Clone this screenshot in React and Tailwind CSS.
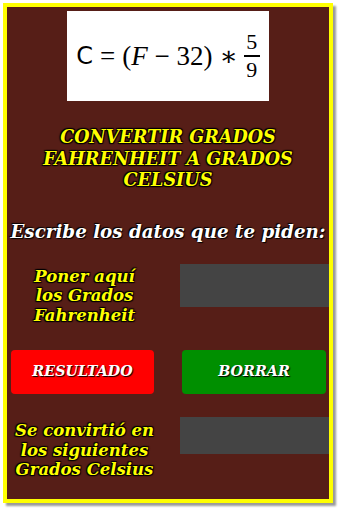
export default function App() {
  const yellowText = "text-[#ffff00] [text-shadow:1px_1px_1px_#000,-1px_-1px_1px_#000,1px_-1px_1px_#000,-1px_1px_1px_#000]";
  const font = { fontFamily: '"DejaVu Serif", "Liberation Serif", serif' };

  return (
    <div className="w-[341px] h-[512px] bg-white pt-[3px] pl-[3px]">
      <div
        className="w-[330px] h-[500px] border-[4px] border-[#ffff00] bg-[#561e17] shadow-[3px_3px_2px_#9a9a9a] flex flex-col"
        style={font}
      >
        {/* formula */}
        <div className="mt-[4px] mx-auto w-[202px] h-[90px] bg-white flex items-center justify-center gap-[6px] text-black"
          style={{ fontFamily: '"Liberation Serif", "DejaVu Serif", serif' }}>
          <span className="text-[27px] leading-none flex items-center gap-[7px]">
            <span style={{ fontFamily: '"DejaVu Sans", sans-serif' }} className="text-[24px]">C</span>
            <span>=</span>
            <span>(<i>F</i> − 32)</span>
            <span>∗</span>
          </span>
          <span className="flex flex-col items-center leading-none text-[22px]">
            <span>5</span>
            <span className="w-[16px] h-[1.5px] bg-black my-[2px]" />
            <span>9</span>
          </span>
        </div>

        {/* title */}
        <div className={`mt-[25px] text-center font-bold italic text-[17.6px] leading-[21.5px] ${yellowText}`}>
          CONVERTIR GRADOS<br />FAHRENHEIT A GRADOS<br />CELSIUS
        </div>

        <div className="mt-[30px] text-center font-bold italic text-[18.3px] leading-[22px] text-white [text-shadow:1px_1px_1px_#000,-1px_-1px_1px_#000]">
          Escribe los datos que te piden:
        </div>

        {/* input row */}
        <div className="mt-[21px] flex items-start">
          <div className={`w-[155px] pt-[3px] text-center font-bold italic text-[16.5px] leading-[19.5px] ${yellowText}`}>
            Poner aquí<br />los Grados<br />Fahrenheit
          </div>
          <input className="ml-[18px] w-[149px] h-[43px] bg-[#444444] outline-none px-2 text-white" />
        </div>

        {/* buttons */}
        <div className="mt-[25px] flex px-[4px] justify-between pr-[3px]">
          <button className="w-[143px] h-[44px] rounded-[4px] bg-[#ff0000] text-white font-bold italic text-[14.3px] [text-shadow:1px_1px_1px_#000]">
            RESULTADO
          </button>
          <button className="w-[144px] h-[44px] rounded-[4px] bg-[#008f00] text-white font-bold italic text-[14.3px] [text-shadow:1px_1px_1px_#000]">
            BORRAR
          </button>
        </div>

        {/* output row */}
        <div className="mt-[23px] flex items-start">
          <div className={`w-[155px] pt-[4px] text-center font-bold italic text-[16.5px] leading-[19.5px] ${yellowText}`}>
            Se convirtió en<br />los siguientes<br />Grados Celsius
          </div>
          <div className="ml-[18px] w-[149px] h-[37px] bg-[#444444]" />
        </div>
      </div>
    </div>
  );
}
